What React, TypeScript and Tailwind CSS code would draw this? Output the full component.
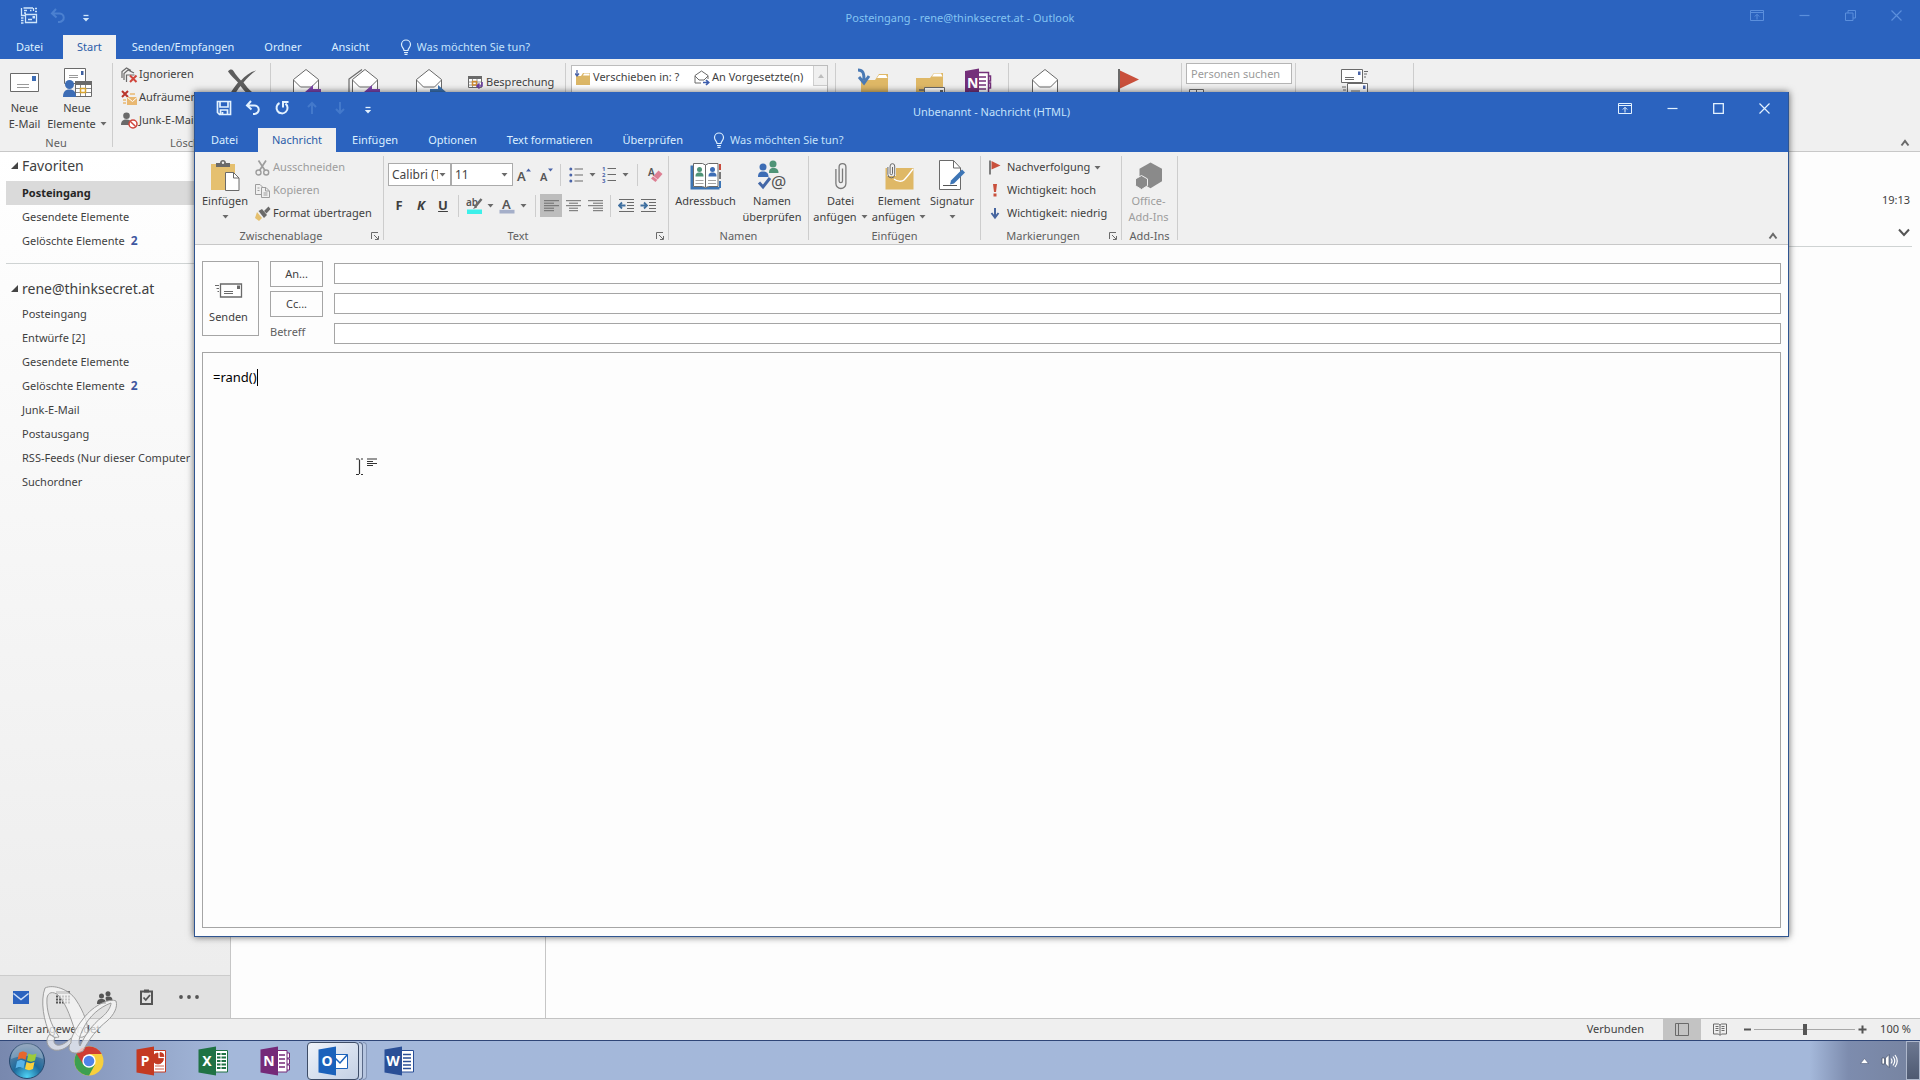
import type { ReactNode } from "react";

const G = "#6a6a6a";

function Svg({ w, h, children }: { w: number; h: number; children: ReactNode }) {
  return (
    <svg width={w} height={h} viewBox={`0 0 ${w} ${h}`} fill="none" aria-hidden="true" className="block shrink-0">
      {children}
    </svg>
  );
}

/* ---------- small glyphs ---------- */

const Caret = () => (
  <Svg w={7} h={4}><path d="M0.5 0h6L3.5 3.6z" fill={G} /></Svg>
);
const ChevronUp = () => (
  <Svg w={10} h={8}><path d="M1.5 6.5L5 2l3.500 4.500" stroke={G} strokeWidth="2" /></Svg>
);
const Launcher = () => (
  <Svg w={8} h={8}><path d="M0.5 7V0.5H7M3 3l4 4M7.500 4v3.500H4" stroke={G} /></Svg>
);
const Bulb = () => (
  <Svg w={12} h={16}>
    <path d="M4 11.500C4 9 1.500 8.500 1.500 5.500a4.500 4.500 0 0 1 9 0C10.500 8.500 8 9 8 11.500zM4 13.500h4M4.500 15.300h3" stroke="currentColor" strokeWidth="1.200" />
  </Svg>
);
const Customize = () => (
  <Svg w={8} h={8}><path d="M1.500 1.500h5" stroke="currentColor" strokeWidth="1.300" /><path d="M0.800 4h6.400L4 7.500z" fill="currentColor" /></Svg>
);
const Undo = () => (
  <Svg w={16} h={16}><path d="M6 1L2 5.500 6.500 9.500M2.500 5.500H9a4.500 4.200 0 0 1 0.500 8.400H8" stroke="currentColor" strokeWidth="2" /></Svg>
);
const Redo = () => (
  <Svg w={16} h={16}><path d="M5.500 3A5.500 5.500 0 1 0 11.500 3.600M9 7.500V2h5.500" stroke="currentColor" strokeWidth="2" /></Svg>
);
const Save = () => (
  <Svg w={16} h={16}><path d="M1.500 1.500h13v13H3.500L1.500 12.500zM4 1.500V7h8V1.500M4.500 14.500V10h7v4.500M6.500 12v2.500" stroke="currentColor" strokeWidth="1.700" /></Svg>
);
const ArrowUp = () => (
  <Svg w={12} h={14}><path d="M6 13V2M2 6l4-4 4 4" stroke="currentColor" strokeWidth="2" /></Svg>
);
const ArrowDown = () => (
  <Svg w={12} h={14}><path d="M6 1v11M2 8l4 4 4-4" stroke="currentColor" strokeWidth="2" /></Svg>
);
const MailSync = () => (
  <Svg w={18} h={18}>
    <path d="M3.500 1H13M1.500 1v7.500H5M13.500 1v3M4 3.500h3M4 6h2M15 1.500h2M15 4.500h2M5.500 7.500h11v8h-11zM8 12.500h4M1 11h2.500M1 13.500h2.500M1 16h2.500M10 3.500h1.500" stroke="currentColor" strokeWidth="1.300" />
    <path d="M12.500 9h2.500v2.500h-2.500z" fill="currentColor" />
  </Svg>
);
const RibbonOptions = () => (
  <Svg w={14} h={11}><path d="M0.500 0.500h13v10H0.500zM0.500 2.500h13M7 9.500V4.500M4.800 6.500L7 4.300l2.200 2.200" stroke="currentColor" /></Svg>
);
const Minimize = () => (
  <Svg w={11} h={11}><path d="M0.500 5.500h10" stroke="currentColor" strokeWidth="1.200" /></Svg>
);
const Maximize = () => (
  <Svg w={11} h={11}><path d="M0.700 0.700h9.600v9.600H0.700z" stroke="currentColor" strokeWidth="1.300" /></Svg>
);
const Restore = () => (
  <Svg w={11} h={11}><path d="M0.500 3h7.500v7.500H0.500zM3 3V0.500h7.500V8H8" stroke="currentColor" /></Svg>
);
const Close = () => (
  <Svg w={11} h={11}><path d="M0.500 0.500l10 10M10.500 0.500l-10 10" stroke="currentColor" strokeWidth="1.200" /></Svg>
);

/* ---------- ribbon icons ---------- */

const NewMail = () => (
  <Svg w={29} h={19}><path d="M0.500 0.500h28v18H0.500z" fill="#fff" stroke={G} /><path d="M22 3h4v5h-4z" fill="#3d6db5" /><path d="M7 11.500h12M7 14.500h12" stroke="#9a9a9a" /></Svg>
);
const NewItems = () => (
  <Svg w={29} h={30}>
    <path d="M1.500 0.500h21v15h-21z" fill="#fff" stroke={G} /><path d="M18 3h2.500v4H18z" fill="#3d5f9f" /><path d="M6 7.500h9M6 9.500h9" stroke="#9a9a9a" />
    <path d="M12.500 13.500h16v15h-16z" fill="#fff" stroke={G} /><path d="M12 13h17v4H12z" fill={G} /><path d="M13 20.500h15M13 24.500h15M17.500 17v11M22.500 17v11" stroke="#8a8a8a" /><path d="M17.500 20.500h5v4h-5z" stroke="#d9a52f" strokeWidth="1.500" />
    <circle cx="6.500" cy="16.500" r="4.500" fill="#3d6db5" /><path d="M0 29c0-5 2-7.500 6.500-7.500S13 24 13 29z" fill="#3d6db5" />
  </Svg>
);
const Ignore = () => (
  <Svg w={17} h={16}><path d="M1 11V4.500L5.500 1 10 3.500M3 13V6.500L7 3l6 3M5.500 15V8h8" stroke={G} strokeWidth="1.200" /><path d="M9 8.500l6.500 6.500M15.500 8.500L9 15" stroke="#d0453b" strokeWidth="2" /></Svg>
);
const CleanUp = () => (
  <Svg w={17} h={16}><path d="M1 1l6 6M7 1L1 7" stroke="#b9352c" strokeWidth="2" /><path d="M6 7h10v8H6z" fill="#e9b872" /><path d="M6.500 7.500l5 4 4.500-4" stroke="#fff" /><path d="M9 4h5M2 10h3M2 13h3" stroke="#e9b872" strokeWidth="1.500" /></Svg>
);
const Junk = () => (
  <Svg w={17} h={17}><circle cx="5.500" cy="3.800" r="3.300" fill={G} /><path d="M0 13c0-4 2-5.500 5.500-5.500 3 0 4 1 4.500 2L8 13z" fill={G} /><circle cx="12" cy="12" r="4" fill="#fff" stroke="#d0453b" strokeWidth="1.500" /><path d="M9.200 9.200l5.600 5.600" stroke="#d0453b" strokeWidth="1.500" /></Svg>
);
const DeleteX = () => (
  <Svg w={30} h={28}><path d="M1 2.500C3 0 5 0 6.500 2 9 6 12 9.500 14 11.500 18 7 23 3 29 1.500 24 5 20 9 16.500 13.500 19 17 22 20.500 25 23l-3 3c-3-2-6-5.500-8.500-9C11 20 9 23 7 27L3 25c2.500-4.500 5-8 8-11.500C7.500 10 4 6.500 1 2.500z" fill="#5d5d5d" /></Svg>
);
function OpenMail({ arrow, double, flip }: { arrow?: string; double?: boolean; flip?: boolean }) {
  return (
    <Svg w={34} h={30}>
      {double && <path d="M1 26V11L14 1.500" stroke={G} strokeWidth="1.200" />}
      <path d="M4.500 29V11.500L17 1.500l12.500 10V29z" fill="#fff" stroke={G} />
      <path d="M4.500 12l7 7h11l7-7" stroke={G} />
      {arrow && !flip && <path d="M32 21h-8v-4l-8 7 8 7v-4h8z" fill={arrow} />}
      {arrow && flip && <path d="M18 21h8v-4l8 7-8 7v-4h-8z" fill={arrow} />}
    </Svg>
  );
}
const Meeting = () => (
  <Svg w={16} h={15}><path d="M0.500 1.500h13v11H0.500z" fill="#fff" stroke={G} /><path d="M0 1h14v3H0z" fill={G} /><path d="M1 7h12M1 10h12M4.500 4v8M9 4v8" stroke="#999" /><path d="M4.500 6.500h4v3.500h-4z" stroke="#d08a2f" strokeWidth="1.500" /><path d="M14 7v4H9.500M11.500 8.500L9 11l2.500 2.500" stroke="#6d3fa0" strokeWidth="1.600" /></Svg>
);
const Folder = () => (
  <Svg w={16} h={16}><path d="M1 6h5l2-3h7v12H1z" fill="#dcb767" /><path d="M9 3.500h5.500v2H8z" fill="#fff" /><path d="M2 0v5M0 3.500L2 6l2-2.500" stroke="#4a64a8" strokeWidth="1.300" /></Svg>
);
const MailForward = () => (
  <Svg w={16} h={16}><path d="M1 13V5.500L7.500 1 14 5.500V9M1 13h6M1 6l4 4h5l4-4" stroke={G} /><path d="M9 12.500h5.500M12 10l2.700 2.500L12 15" stroke="#3f5fae" strokeWidth="1.700" /></Svg>
);
const MoveFolder = () => (
  <Svg w={32} h={30}><path d="M4 12h14l4-6h9v24H4z" fill="#dfb866" /><path d="M22 7h7l1.500 3H20z" fill="#fff" /><path d="M1 2c5 0 6 3 6 10M2 9l5 6 5-7" stroke="#4a7ab5" strokeWidth="3" /></Svg>
);
const RulesFolder = () => (
  <Svg w={32} h={30}><path d="M1 10h14l4-5h9v25H1z" fill="#dfb866" /><path d="M19 5.500h7l1.500 3H17z" fill="#fff" /><path d="M9.500 19.500h20v10h-20z" fill="#fff" stroke={G} /><path d="M25 22h3v4h-3z" fill={G} /><path d="M4 22h5M4 25h5M5 28h4M12 26h8" stroke={G} strokeWidth="1.500" /></Svg>
);
const OneNoteRibbon = () => (
  <Svg w={30} h={30}>
    <path d="M14 4.500h12.500v23H14z" fill="#fff" stroke="#74307a" strokeWidth="1.500" /><path d="M26.500 8h2v5h-2M26.500 15h2v5h-2M17 9h7M17 13h7M17 17h7M17 21h7" stroke="#74307a" strokeWidth="1.500" />
    <path d="M3 3l14-2.500v29L3 27z" fill="#74307a" />
    <text x="5" y="20" fontSize="14" fontWeight="700" fill="#fff" fontFamily="Noto Sans, sans-serif">N</text>
    <path d="M0 27h7v-4l7 5-7 5z" fill="#4a64a8" />
  </Svg>
);
const BigFlag = () => (
  <Svg w={24} h={30}><path d="M3 2.500l19 9-19 9z" fill="#c9503c" /><path d="M2 1v29" stroke={G} strokeWidth="2" /></Svg>
);
const SendReceive = () => (
  <Svg w={30} h={30}><path d="M1.500 1.500h21v13h-21zM7.500 15.500h20v13h-20z" fill="#fff" stroke={G} /><path d="M18 3.500h2.500V7H18zM23 17.500h2.500V21H23z" fill="#4a64a8" /><path d="M5 9.500h9M5 11.500h9M11 23h9M11 25h9M24 3.500h4M24 6h3M24 9h2M2 19h4M3 22h3M4 25h2" stroke={G} /></Svg>
);
const Contacts = () => (
  <Svg w={16} h={14}><path d="M0.500 0.500h14v12h-14zM7.500 0v12" fill="#fff" stroke={G} /><circle cx="4" cy="4.500" r="1.500" fill="#4b8a6a" /><circle cx="11" cy="4.500" r="1.500" fill="#3d6db5" /></Svg>
);

const Paste = () => (
  <Svg w={30} h={31}><path d="M1 4h24v26H1z" fill="#e5c06f" /><path d="M6 7V3h4c0-4 6-4 6 0h4v4z" fill={G} /><circle cx="13" cy="2.800" r="1.200" fill="#f0f0f0" /><path d="M15.500 12.500h8l5.500 5.500v12.500H15.500z" fill="#fff" stroke={G} /><path d="M23.500 12.500V18H29" stroke={G} /></Svg>
);
const Cut = () => (
  <Svg w={15} h={16}><path d="M3.500 0.500l6.500 10M11 0.500L4.500 10.500" stroke="#9d9d9d" strokeWidth="1.700" /><circle cx="3.500" cy="12.500" r="2.500" stroke="#9d9d9d" strokeWidth="1.400" /><circle cx="11.200" cy="12.500" r="2.500" stroke="#9d9d9d" strokeWidth="1.400" /></Svg>
);
const Copy = () => (
  <Svg w={15} h={14}><path d="M6 10.500H0.500v-10H5l2.500 2.500M6.500 3.500H11l3.500 3.500v6.500h-8zM10.500 3.500V7H14M2.500 4h2M2.500 6.500h2M8.500 9h4M8.500 11h4" stroke="#9d9d9d" /></Svg>
);
const Brush = () => (
  <Svg w={16} h={15}><path d="M2 6l5 6-3 3-4-3z" fill="#e5c06f" /><path d="M3.500 5L7 3l5 6-3 3z" fill={G} /><path d="M9 5l4.500-4.500L15.500 3l-4 4.500z" fill={G} /></Svg>
);
const GrowFont = () => (
  <Svg w={16} h={16}><text x="1" y="14" fontSize="13" fontWeight="600" fill="#555" fontFamily="Noto Sans, sans-serif">A</text><path d="M10 4.500L12.500 1.500 15 4.500z" fill="#4a64a8" /></Svg>
);
const ShrinkFont = () => (
  <Svg w={16} h={16}><text x="2" y="14" fontSize="11" fontWeight="600" fill="#555" fontFamily="Noto Sans, sans-serif">A</text><path d="M10 1.500h5L12.500 4.500z" fill="#4a64a8" /></Svg>
);
const Bullets = () => (
  <Svg w={15} h={16}><circle cx="1.800" cy="2" r="1.500" fill="#4a64a8" /><circle cx="1.800" cy="8" r="1.500" fill="#4a64a8" /><circle cx="1.800" cy="14" r="1.500" fill="#4a64a8" /><path d="M5.500 2H14M5.500 8H14M5.500 14H14" stroke={G} strokeWidth="1.200" /></Svg>
);
const Numbering = () => (
  <Svg w={15} h={17}>
    <g fontSize="6" fontWeight="700" fill="#4a64a8" fontFamily="Noto Sans, sans-serif"><text x="0" y="5">1</text><text x="0" y="11">2</text><text x="0" y="17">3</text></g>
    <path d="M5.500 2.500H14M5.500 8.500H14M5.500 14.500H14" stroke={G} strokeWidth="1.200" />
  </Svg>
);
const ClearFormat = () => (
  <Svg w={16} h={16}><text x="1" y="9" fontSize="10" fontWeight="600" fill="#555" fontFamily="Noto Sans, sans-serif">A</text><path d="M11.500 3.500L15.500 7 8.500 15 4 11.500z" fill="#dd7f93" /><path d="M6 9l5 4" stroke="#f5d0d8" /></Svg>
);
const Highlight = () => (
  <Svg w={17} h={17}><text x="0" y="9" fontSize="10" fontWeight="600" fill="#555" fontFamily="Noto Sans, sans-serif">ab</text><path d="M15.500 2L9 10" stroke={G} strokeWidth="2.500" /><path d="M9.500 8.500L7 12l4-1.500z" fill={G} /><path d="M1 12.500h15V17H1z" fill="#3df0ea" /></Svg>
);
const FontColor = () => (
  <Svg w={16} h={17}><text x="3" y="12" fontSize="13" fontWeight="600" fill="#555" fontFamily="Noto Sans, sans-serif">A</text><path d="M0.500 12.800h15V16.500h-15z" fill="#a5afc9" /></Svg>
);
function Lines({ rows }: { rows: [number, number][] }) {
  return (
    <Svg w={15} h={12}>
      {rows.map(([a, b], i) => <path key={i} d={`M${a} ${i * 2.500 + 0.700}H${b}`} stroke={G} />)}
    </Svg>
  );
}
function Indent({ out }: { out?: boolean }) {
  return (
    <Svg w={17} h={13}>
      <path d="M1 0.500h15M9 3.500h7M9 6.500h7M9 9.500h7M1 12.500h15" stroke={G} />
      <path d={out ? "M7.500 6.500H1.500M4 3.500l-3 3 3 3" : "M0.500 6.500h6M4 3.500l3 3-3 3"} stroke="#3f6f9f" strokeWidth="1.800" />
    </Svg>
  );
}
const AddressBook = () => (
  <Svg w={32} h={28}>
    <path d="M0.500 3.500h3V25h26v2.500H0.500z" fill="#3d75b5" /><path d="M29 2h2v6h-2z" fill="#c94a3c" /><path d="M29 10h2v7h-2z" fill="#777" /><path d="M29 19h2v7h-2z" fill="#3d75b5" />
    <path d="M3.500 1.500h9L15.500 3l3-1.500h9.500v23h-9.500l-3 1.200-3-1.200h-9zM15.500 3v22" fill="#fff" stroke={G} />
    <circle cx="9.500" cy="7.500" r="2.500" fill="#4f9477" /><path d="M5.500 14.500c0-3 1-4 4-4s4 1 4 4z" fill="#4f9477" /><circle cx="22.500" cy="7.500" r="2.500" fill="#3d6db5" /><path d="M18.500 14.500c0-3 1-4 4-4s4 1 4 4z" fill="#3d6db5" />
    <path d="M5.500 18.500h8M5.500 21.500h8M18 18.500h8M18 21.500h8" stroke="#a5a5a5" />
  </Svg>
);
const CheckNames = () => (
  <Svg w={31} h={31}>
    <circle cx="16" cy="4" r="3.500" fill="#4f9477" /><path d="M12 13c0-3.500 1-5 4.500-5s5 1.500 5 5z" fill="#4f9477" />
    <circle cx="6" cy="7" r="3.500" fill="#3d6db5" /><path d="M1 17c0-4 1.500-5.500 5-5.500s5.500 1.500 5.500 5.500z" fill="#3d6db5" />
    <path d="M2 22.500l4 4.500 7-9" stroke="#4468a8" strokeWidth="3" />
    <text x="14" y="28" fontSize="17" fill="#555" fontFamily="Noto Sans, sans-serif">@</text>
  </Svg>
);
const Clip = () => (
  <Svg w={12} h={29}><path d="M7.500 7.500V20a1.700 1.700 0 0 1-3.400 0V6a3.400 3.400 0 0 1 6.800 0V22.500a5 5 0 0 1-10 0V8" stroke="#7a7a7a" strokeWidth="1.300" /></Svg>
);
const AttachItem = () => (
  <Svg w={29} h={28}><path d="M0.500 6h28v21.500h-28z" fill="#dfb866" /><path d="M9 17c3 2.500 8 3 10 1 3-3 6-7 9-11" stroke="#fff" strokeWidth="1.300" /><path d="M2 2h9v12H2z" fill="#f0f0f0" /><path d="M7.500 5v6.500a1.200 1.200 0 0 1-2.400 0V4a2.300 2.300 0 0 1 4.600 0v8.500a3.400 3.400 0 0 1-6.800 0V5" stroke={G} /></Svg>
);
const Signature = () => (
  <Svg w={28} h={31}><path d="M1.500 0.500h14l7 7.500v21.500h-21z" fill="#fff" stroke={G} /><path d="M15.500 0.500V8h7" stroke={G} /><path d="M5 25.500h14" stroke="#555" /><path d="M12 24.500l1-4L24 9.500l3 3L16 23.500z" fill="#3d75b5" /></Svg>
);
const Flag = () => (
  <Svg w={12} h={15}><path d="M2.500 1L11.500 5.500 2.500 9.500z" fill="#c9503c" /><path d="M1 0.500v14" stroke={G} strokeWidth="1.700" /></Svg>
);
const High = () => (
  <Svg w={12} h={13}><path d="M4 0h4L7 8H5z" fill="#c9503c" /><path d="M4.500 9.500h3v3h-3z" fill="#c9503c" /></Svg>
);
const Low = () => (
  <Svg w={12} h={13}><path d="M6 1v9M2.500 6L6 10.500 9.500 6" stroke="#46659f" strokeWidth="2" /></Svg>
);
const AddIns = () => (
  <Svg w={28} h={28}><path d="M15.500 0.500l11.500 6.300v12.400l-11.500 7-11-6.200V6.800z" fill="#8a8a8a" /><path d="M6.500 13.500l6 3.400v6.800l-6 3.800-6-3.800v-6.800z" fill="#8a8a8a" stroke="#f0f0f0" /></Svg>
);
const SendIcon = () => (
  <Svg w={28} h={15}><path d="M5.500 1h21v13h-21z" fill="#fff" stroke={G} strokeWidth="1.300" /><path d="M22 2.500h3V6h-3z" fill={G} /><path d="M9 8.500h9M9 10.500h9M0 2.500h4M1.500 5.500H4M2.500 8.500H4" stroke={G} /></Svg>
);

/* ---------- ribbon parts ---------- */

function Sep() {
  return <div className="my-1 w-px shrink-0 bg-[#cdcdcd]" />;
}
function MiniSep({ className }: { className: string }) {
  return <div className={`h-[22px] w-px shrink-0 bg-[#cdcdcd] ${className}`} />;
}
function Group({ name, label, width, launcher, children }: { name?: string; label?: string; width: string; launcher?: boolean; children: ReactNode }) {
  return (
    <>
      <section aria-label={name ?? label} className={`flex shrink-0 flex-col pt-1 ${width}`}>
        <div className="flex flex-1">{children}</div>
        <div className={`relative h-4 text-center leading-4 text-[#5f5f5f] ${launcher ? "pr-4" : ""}`}>
          {label}
          {launcher && (
            <button type="button" aria-label={`${label}: weitere Optionen`} className="absolute right-1 top-1"><Launcher /></button>
          )}
        </div>
      </section>
      <Sep />
    </>
  );
}
function Big({ icon, name, l1, l2, caret, width, muted }: { icon: ReactNode; name?: string; l1?: string; l2?: string; caret?: boolean; width: string; muted?: boolean }) {
  return (
    <button type="button" aria-label={name} className={`flex shrink-0 flex-col items-center pt-0.5 ${width} ${muted ? "text-[#9d9d9d]" : ""}`}>
      <span className="flex h-[35px] items-center">{icon}</span>
      <span className="h-4 whitespace-nowrap leading-4">{l1}</span>
      <span className="flex h-4 items-center gap-1 whitespace-nowrap leading-4">{l2}{caret && <Caret />}</span>
    </button>
  );
}
function Small({ icon, name, text, caret, muted }: { icon: ReactNode; name?: string; text?: string; caret?: boolean; muted?: boolean }) {
  return (
    <button type="button" aria-label={name} className={`flex h-[23px] items-center whitespace-nowrap ${muted ? "text-[#9d9d9d]" : ""}`}>
      <span className="flex w-[18px] shrink-0 items-center">{icon}</span>
      {text}
      {caret && <span className="ml-1"><Caret /></span>}
    </button>
  );
}
function Tool({ label, children, width = "w-[22px]", active }: { label: string; children: ReactNode; width?: string; active?: boolean }) {
  return (
    <button type="button" aria-label={label} className={`flex h-[23px] shrink-0 items-center justify-center ${width} ${active ? "bg-[#bdbdbd]" : ""}`}>
      {children}
    </button>
  );
}
function Combo({ label, value, width }: { label: string; value: string; width: string }) {
  return (
    <div className={`relative h-[23px] shrink-0 border border-[#ababab] bg-white ${width}`}>
      <select aria-label={label} className="h-full w-full appearance-none bg-transparent pl-[3px] pr-3 text-[12px] text-[#444] outline-none">
        <option>{value}</option>
      </select>
      <span className="pointer-events-none absolute right-1 top-[9px]"><Caret /></span>
    </div>
  );
}
function Tabs({ active, items }: { active: string; items: string[] }) {
  return (
    <nav className="flex h-6 gap-0.5 text-[#dcefff]">
      <button type="button" className="w-[61px] pr-0.5 pt-px">Datei</button>
      {items.map((t) => (
        <button key={t} type="button" className={`whitespace-nowrap px-[14px] ${t === active ? "bg-[#f0f0f0] text-[#2b5da8]" : ""}`}>{t}</button>
      ))}
      <label className="ml-[14px] flex items-center gap-[5px]">
        <Bulb />
        <input aria-label="Was möchten Sie tun?" placeholder="Was möchten Sie tun?" className="w-[140px] bg-transparent outline-none placeholder:text-[#c4e2fb]" />
      </label>
    </nav>
  );
}

/* ---------- main window ---------- */

type FolderItem = { name: string; count?: number; selected?: boolean };

function Folders({ items }: { items: FolderItem[] }) {
  return (
    <ul>
      {items.map(({ name, count, selected }) => (
        <li key={name}>
          <a href="#" className={`ml-1.5 flex h-6 items-center whitespace-nowrap pl-4 ${selected ? "bg-[#dadada] font-bold text-[#262626]" : ""}`}>
            {name}
            {count && <span className="ml-1.5 text-[12px] font-bold text-[#3f57a0]">{count}</span>}
          </a>
        </li>
      ))}
    </ul>
  );
}
const FolderHead = ({ text }: { text: string }) => (
  <h2 className="flex h-[26px] items-center gap-1 pl-[11px] text-[14px]">
    <Svg w={7} h={7}><path d="M7 0v7H0z" fill="#444" /></Svg>{text}
  </h2>
);

function Sidebar() {
  return (
    <aside className="flex w-[231px] shrink-0 flex-col border-r border-[#c6c6c6] bg-linear-to-b from-white to-[#ececec]">
      <div className="flex-1 overflow-hidden">
        <div className="h-[29px]"><FolderHead text="Favoriten" /></div>
        <Folders items={[{ name: "Posteingang", selected: true }, { name: "Gesendete Elemente" }, { name: "Gelöschte Elemente", count: 2 }]} />
        <div className="ml-1.5 mt-[10px] border-t border-[#cfd3d3]" />
        <div className="pb-px pt-[11px]"><FolderHead text="rene@thinksecret.at" /></div>
        <Folders
          items={[
            { name: "Posteingang" }, { name: "Entwürfe [2]" }, { name: "Gesendete Elemente" }, { name: "Gelöschte Elemente", count: 2 },
            { name: "Junk-E-Mail" }, { name: "Postausgang" }, { name: "RSS-Feeds (Nur dieser Computer" }, { name: "Suchordner" },
          ]}
        />
      </div>
      <nav className="relative flex h-[43px] items-center border-t border-[#cccccc] bg-[#e1e1e1] pl-[13px]">
        <button type="button" aria-label="E-Mail" className="w-[43px]"><Svg w={16} h={13}><path d="M0 0h16v13H0z" fill="#2b63bf" /><path d="M0.500 2.500L8 8.500l7.500-6" stroke="#cfe0f8" strokeWidth="1.500" /></Svg></button>
        <button type="button" aria-label="Kalender" className="w-[41px]"><Svg w={14} h={13}><path d="M0 0h14v3H0z" fill="#777" /><path d="M0 5.500h14M0 8.500h14M0 11.500h14" stroke="#555" strokeWidth="2" strokeDasharray="2 1" /></Svg></button>
        <button type="button" aria-label="Personen" className="w-[43px]"><Svg w={16} h={13}><circle cx="11" cy="2.700" r="2.500" fill="#555" /><circle cx="4.500" cy="5" r="2.500" fill="#555" /><path d="M0 13c0-4 1.500-5 4.500-5s4.500 1 4.500 5zM9 9c-1-3 0-3.500 2-3.500 3.500 0 4.500 1 4.500 4.500H9.500z" fill="#555" /></Svg></button>
        <button type="button" aria-label="Aufgaben" className="w-[39px]"><Svg w={13} h={16}><path d="M1 2.500h11v12.500H1z" stroke="#555" strokeWidth="2" /><path d="M4 0.500h5v3H4z" fill="#555" /><path d="M3.500 8.500l2.300 2.500L10 6" stroke="#555" strokeWidth="1.800" /></Svg></button>
        <button type="button" aria-label="Mehr"><Svg w={20} h={4}><circle cx="2" cy="2" r="1.900" fill="#555" /><circle cx="10" cy="2" r="1.900" fill="#555" /><circle cx="18" cy="2" r="1.900" fill="#555" /></Svg></button>
      </nav>
    </aside>
  );
}

function MainWindow() {
  return (
    <div className="flex min-h-0 flex-1 flex-col">
      <header className="flex h-[59px] flex-col justify-between bg-[#2b63bf]">
        <div className="relative flex h-[35px] items-center">
          <div className="flex items-center pb-1 text-[#cfe6fb]">
            <button type="button" aria-label="Senden/Empfangen" className="ml-5"><MailSync /></button>
            <button type="button" aria-label="Rückgängig" className="ml-3 text-[#4b80d0]"><Undo /></button>
            <button type="button" aria-label="Symbolleiste anpassen" className="ml-4 pt-1"><Customize /></button>
          </div>
          <h1 className="absolute inset-x-0 top-2.5 text-center leading-4 text-[#84c3f2]">Posteingang - rene@thinksecret.at - Outlook</h1>
          <div className="ml-auto flex items-center gap-[35px] pb-1 pr-[18px] text-[#5b8fdc]">
            <button type="button" aria-label="Menüband"><RibbonOptions /></button>
            <button type="button" aria-label="Minimieren"><Minimize /></button>
            <button type="button" aria-label="Wiederherstellen"><Restore /></button>
            <button type="button" aria-label="Schließen"><Close /></button>
          </div>
        </div>
        <Tabs active="Start" items={["Start", "Senden/Empfangen", "Ordner", "Ansicht"]} />
      </header>

      <div className="flex h-[93px] shrink-0 border-b border-[#c8c8c8] bg-[#f0f0f0]">
        <Group label="Neu" width="w-[112px]">
          <Big width="w-[49px]" icon={<NewMail />} l1="Neue" l2="E-Mail" />
          <Big width="w-[56px]" icon={<NewItems />} l1="Neue" l2="Elemente" caret />
        </Group>
        <Group label="Löschen" width="w-[157px]">
          <div className="w-[107px] pl-2">
            <Small icon={<Ignore />} text="Ignorieren" />
            <Small icon={<CleanUp />} text="Aufräumen" />
            <Small icon={<Junk />} text="Junk-E-Mail" />
          </div>
          <Big width="w-[44px]" icon={<DeleteX />} name="Löschen" />
        </Group>
        <Group name="Antworten" width="w-[294px]">
          <Big width="w-[69px]" icon={<OpenMail arrow="#7e45ae" />} name="Antworten" />
          <Big width="w-[49px]" icon={<OpenMail arrow="#7e45ae" double />} name="Allen antworten" />
          <Big width="w-[79px]" icon={<OpenMail arrow="#3d75b5" flip />} name="Weiterleiten" />
          <div className="pt-2"><Small icon={<Meeting />} text="Besprechung" /></div>
        </Group>
        <Group name="QuickSteps" width="w-[269px]">
          <div className="ml-[5px] mt-0.5 flex h-[60px] w-[257px] border border-[#bdbdbd] bg-white">
            <div className="w-[122px] pl-[3px]"><Small icon={<Folder />} text="Verschieben in: ?" /><Small icon={<Contacts />} name="Team-E-Mail" /></div>
            <div className="flex-1"><Small icon={<MailForward />} text="An Vorgesetzte(n)" /><Small icon={<MailForward />} name="Erledigt" /></div>
            <div className="flex h-5 w-[14px] items-center justify-center border-b border-l border-[#cfcfcf] bg-[#f0f0f0]"><Svg w={6} h={4}><path d="M0 4h6L3 0z" fill="#bdbdbd" /></Svg></div>
          </div>
        </Group>
        <Group name="Verschieben" width="w-[172px]">
          <Big width="w-[74px]" icon={<MoveFolder />} name="Verschieben" />
          <Big width="w-[42px]" icon={<RulesFolder />} name="Regeln" />
          <Big width="w-[50px]" icon={<OneNoteRibbon />} name="OneNote" />
        </Group>
        <Group name="Kategorien" width="w-[172px]">
          <Big width="w-[72px]" icon={<OpenMail />} name="Gelesen" />
          <Big width="w-[96px]" icon={<BigFlag />} name="Nachverfolgung" />
        </Group>
        <Group name="Suchen" width="w-[113px]">
          <div className="w-full">
            <input aria-label="Personen suchen" placeholder="Personen suchen" className="ml-1 block h-[21px] w-[106px] border border-[#b5b5b5] bg-white px-1 outline-none placeholder:text-[#9a9a9a]" />
            <div className="pl-[7px]"><Small icon={<Contacts />} name="Adressbuch" /></div>
          </div>
        </Group>
        <Group name="Senden/Empfangen" width="w-[117px]">
          <Big width="w-full" icon={<SendReceive />} name="Alle Ordner senden/empfangen" />
        </Group>
        <button type="button" aria-label="Menüband reduzieren" className="ml-auto mr-[10px] self-end pb-1"><ChevronUp /></button>
      </div>

      <div className="flex min-h-0 flex-1 bg-[#fdfdfd]">
        <Sidebar />
        <div className="w-[315px] shrink-0 border-r border-[#c6c6c6]" />
        <main className="min-w-0 flex-1 px-2">
          <div className="flex h-[95px] flex-col items-end border-b border-[#cfd3d3] pr-0.5 pt-10">
            <time className="leading-4">19:13</time>
            <button type="button" aria-label="Details" className="mt-5"><Svg w={12} h={9}><path d="M1 1.500l5 5.500 5-5.500" stroke="#555" strokeWidth="2" /></Svg></button>
          </div>
        </main>
      </div>

      <footer className="flex h-[22px] shrink-0 items-center border-t border-[#c3c3c3] bg-[#efefef]">
        <span className="pl-[7px]">Filter angewendet</span>
        <span className="ml-auto mr-[19px]">Verbunden</span>
        <button type="button" aria-label="Normal" className="flex h-full w-[38px] items-center justify-center bg-[#c3c3c3]"><Svg w={14} h={13}><path d="M0.500 0.500h13v12H0.500zM3.500 0.500v12" stroke={G} /></Svg></button>
        <button type="button" aria-label="Lesen" className="ml-3"><Svg w={14} h={13}><path d="M0.500 1h5l1.500 1 1.500-1h5v10h-5L7 12.500 5.500 11h-5zM7 2v10M2.500 3.500h3M2.500 5.500h3M2.500 7.500h3M8.500 3.500h3M8.500 5.500h3M8.500 7.500h3" stroke={G} /></Svg></button>
        <button type="button" aria-label="Verkleinern" className="ml-[17px]"><Svg w={7} h={7}><path d="M0 3.500h7" stroke="#555" strokeWidth="2" /></Svg></button>
        <input type="range" aria-label="Zoom" defaultValue={50} className="mx-[3px] h-3 w-[101px] appearance-none bg-transparent [&::-webkit-slider-runnable-track]:h-px [&::-webkit-slider-runnable-track]:bg-[#a8a8a8] [&::-webkit-slider-thumb]:-mt-[5px] [&::-webkit-slider-thumb]:h-[11px] [&::-webkit-slider-thumb]:w-1 [&::-webkit-slider-thumb]:appearance-none [&::-webkit-slider-thumb]:bg-[#555]" />
        <button type="button" aria-label="Vergrößern"><Svg w={9} h={9}><path d="M0.500 4.500h8M4.500 0.500v8" stroke="#555" strokeWidth="2" /></Svg></button>
        <span className="w-[53px] pr-[9px] text-right">100 %</span>
      </footer>
    </div>
  );
}

/* ---------- message window ---------- */

function Compose() {
  return (
    <div role="dialog" aria-label="Unbenannt - Nachricht (HTML)" className="absolute bottom-[143px] left-[194px] right-[131px] top-[92px] flex flex-col border border-t-0 border-[#2f5591] bg-[#fdfdfd] shadow-[0_0_7px_rgba(0,0,0,0.6)]">
      <header className="flex h-[60px] shrink-0 flex-col justify-between bg-[#2b63bf]">
        <div className="relative flex h-8 items-center text-[#e3f2ff]">
          <div className="flex items-center">
            <button type="button" aria-label="Speichern" className="ml-[21px]"><Save /></button>
            <button type="button" aria-label="Rückgängig" className="ml-[13px]"><Undo /></button>
            <button type="button" aria-label="Wiederholen" className="ml-[13px]"><Redo /></button>
            <button type="button" aria-label="Vorheriges" className="ml-4 text-[#4379cb]"><ArrowUp /></button>
            <button type="button" aria-label="Nächstes" className="ml-4 text-[#4379cb]"><ArrowDown /></button>
            <button type="button" aria-label="Symbolleiste anpassen" className="ml-[18px] pt-1"><Customize /></button>
          </div>
          <h2 className="absolute inset-x-0 top-3 text-center leading-4 text-[#c4e2fb]">Unbenannt - Nachricht (HTML)</h2>
          <div className="ml-auto flex items-center gap-[35px] pr-[18px]">
            <button type="button" aria-label="Menüband"><RibbonOptions /></button>
            <button type="button" aria-label="Minimieren"><Minimize /></button>
            <button type="button" aria-label="Maximieren"><Maximize /></button>
            <button type="button" aria-label="Schließen"><Close /></button>
          </div>
        </div>
        <Tabs active="Nachricht" items={["Nachricht", "Einfügen", "Optionen", "Text formatieren", "Überprüfen"]} />
      </header>

      <div className="flex h-[93px] shrink-0 border-b border-[#c8c8c8] bg-[#f0f0f0]">
        <Group label="Zwischenablage" width="w-[188px]" launcher>
          <Big width="w-[60px]" icon={<Paste />} l1="Einfügen" caret />
          <div>
            <Small icon={<Cut />} text="Ausschneiden" muted />
            <Small icon={<Copy />} text="Kopieren" muted />
            <Small icon={<Brush />} text="Format übertragen" />
          </div>
        </Group>
        <Group label="Text" width="w-[284px]" launcher>
          <div className="pl-1 pt-[3px]">
            <div className="flex h-[31px] items-center">
              <Combo label="Schriftart" value="Calibri (T" width="w-[63px]" />
              <Combo label="Schriftgrad" value="11" width="w-[62px]" />
              <Tool label="Schrift vergrößern"><GrowFont /></Tool>
              <Tool label="Schrift verkleinern"><ShrinkFont /></Tool>
              <MiniSep className="ml-[3px] mr-1" />
              <Tool label="Aufzählung"><Bullets /></Tool>
              <Tool label="Aufzählungsoptionen" width="w-[11px]"><Caret /></Tool>
              <Tool label="Nummerierung"><Numbering /></Tool>
              <Tool label="Nummerierungsoptionen" width="w-[11px]"><Caret /></Tool>
              <MiniSep className="mx-1.5" />
              <Tool label="Formatierung löschen"><ClearFormat /></Tool>
            </div>
            <div className="flex h-[31px] items-center">
              <Tool label="Fett"><span className="text-[13px] font-bold">F</span></Tool>
              <Tool label="Kursiv"><span className="text-[13px] font-bold italic">K</span></Tool>
              <Tool label="Unterstrichen"><span className="text-[13px] font-bold underline">U</span></Tool>
              <MiniSep className="mx-1" />
              <Tool label="Hervorheben"><Highlight /></Tool>
              <Tool label="Hervorhebungsfarben" width="w-[11px]"><Caret /></Tool>
              <Tool label="Schriftfarbe"><FontColor /></Tool>
              <Tool label="Schriftfarben" width="w-[11px]"><Caret /></Tool>
              <MiniSep className="ml-1.5 mr-1" />
              <Tool label="Linksbündig" active><Lines rows={[[0, 15], [0, 10], [0, 15], [0, 10], [0, 10]]} /></Tool>
              <Tool label="Zentriert"><Lines rows={[[0, 15], [3, 12], [0, 15], [3, 12], [3, 12]]} /></Tool>
              <Tool label="Rechtsbündig"><Lines rows={[[0, 15], [5, 15], [0, 15], [5, 15], [5, 15]]} /></Tool>
              <MiniSep className="mx-1" />
              <Tool label="Einzug verkleinern"><Indent out /></Tool>
              <Tool label="Einzug vergrößern"><Indent /></Tool>
            </div>
          </div>
        </Group>
        <Group label="Namen" width="w-[139px]">
          <Big width="w-[73px]" icon={<AddressBook />} l1="Adressbuch" />
          <Big width="w-[60px]" icon={<CheckNames />} l1="Namen" l2="überprüfen" />
        </Group>
        <Group label="Einfügen" width="w-[171px]">
          <Big width="w-[63px]" icon={<Clip />} l1="Datei" l2="anfügen" caret />
          <Big width="w-[54px]" icon={<AttachItem />} l1="Element" l2="anfügen" caret />
          <Big width="w-[52px]" icon={<Signature />} l1="Signatur" caret />
        </Group>
        <Group label="Markierungen" width="w-[140px]" launcher>
          <div className="pl-2">
            <Small icon={<Flag />} text="Nachverfolgung" caret />
            <Small icon={<High />} text="Wichtigkeit: hoch" />
            <Small icon={<Low />} text="Wichtigkeit: niedrig" />
          </div>
        </Group>
        <Group label="Add-Ins" width="w-[55px]">
          <Big width="w-[53px]" icon={<AddIns />} l1="Office-" l2="Add-Ins" muted />
        </Group>
        <button type="button" aria-label="Menüband reduzieren" className="ml-auto mr-[10px] self-end pb-1"><ChevronUp /></button>
      </div>

      <form className="flex flex-1 flex-col px-[7px] pb-2 pt-4">
        <div className="flex h-[91px] items-start">
          <button type="button" className="flex h-[75px] w-[57px] flex-col items-center justify-center gap-[11px] border border-[#a5a5a5] pr-1 pt-2.5">
            <SendIcon />
            <span className="leading-4">Senden</span>
          </button>
          <div className="ml-[11px] flex flex-1 flex-col gap-1">
            {["An...", "Cc..."].map((t) => (
              <div key={t} className="flex h-[26px] items-start gap-[11px]">
                <button type="button" className="h-[26px] w-[53px] border border-[#a5a5a5]">{t}</button>
                <input aria-label={t} className="mt-0.5 h-[21px] flex-1 border border-[#a5a5a5] bg-white px-1 outline-none" />
              </div>
            ))}
            <div className="flex h-[26px] items-start gap-[11px]">
              <label htmlFor="subject" className="w-[53px] pt-[3px] leading-4 text-[#5f5f5f]">Betreff</label>
              <input id="subject" className="mt-0.5 h-[21px] flex-1 border border-[#a5a5a5] bg-white px-1 outline-none" />
            </div>
          </div>
        </div>
        <div className="relative flex flex-1 border border-[#a5a5a5]">
          <textarea aria-label="Nachrichtentext" defaultValue="=rand()" className="flex-1 resize-none bg-transparent px-[10px] py-[15px] text-[13px] leading-[18px] text-black outline-none" />
          <span className="absolute left-[54px] top-4 h-[17px] w-px bg-black" />
          <span className="absolute left-[152px] top-[105px]">
            <Svg w={24} h={18}><path d="M1 1h3M6 1h2M1 16.500h3M6 16.500h2M4.500 1.500V16" stroke="#333" strokeWidth="1.200" /><path d="M12 1h10M12 3.500h6M12 5.500h10M12 7.500h6" stroke="#333" strokeWidth="1.200" /></Svg>
          </span>
        </div>
      </form>
    </div>
  );
}

/* ---------- taskbar ---------- */

function AppIcon({ letter, color, children }: { letter: string; color: string; children: ReactNode }) {
  return (
    <Svg w={31} h={30}>
      {children}
      <path d="M0.500 3.500L18 0.500v29L0.500 26.500z" fill={color} />
      <text x="9" y="20" textAnchor="middle" fontSize="14" fontWeight="700" fill="#fff" fontFamily="Noto Sans, sans-serif">{letter}</text>
    </Svg>
  );
}

function Taskbar() {
  return (
    <nav className="flex h-10 shrink-0 items-center border-t border-[#2f4677] bg-linear-to-r from-[#7888ae] via-[#a4b8da] via-12% to-[#a4b8da]">
      <button type="button" aria-label="Start" className="ml-2">
        <svg width="38" height="38" viewBox="0 0 38 38" aria-hidden="true">
          <defs>
            <radialGradient id="orb" cx="0.500" cy="0.950" r="0.900"><stop offset="0" stopColor="#4fd3f5" /><stop offset="0.450" stopColor="#1d6a9c" /><stop offset="1" stopColor="#6d88a8" /></radialGradient>
          </defs>
          <circle cx="19" cy="19" r="17.500" fill="url(#orb)" stroke="#27496f" />
          <path d="M3 17a16 16 0 0 1 32 0c-8-4-24-4-32 0z" fill="#fff" opacity="0.250" />
          <path d="M11 11c3-2 5-2 8 0l-1.500 7c-3-2-5-2-8 0z" fill="#e8672c" /><path d="M20.500 11.500c3 1.500 5 1.500 8 0L27 18.500c-3 1.500-5 1.500-8 0z" fill="#9ccb3b" />
          <path d="M9 19.500c3-2 5-2 8 0l-1.500 7c-3-2-5-2-8 0z" fill="#58b3e8" /><path d="M18.500 20c3 1.500 5 1.500 8 0L25 27c-3 1.500-5 1.500-8 0z" fill="#fbd03b" />
        </svg>
      </button>
      <button type="button" aria-label="Chrome" className="ml-7">
        <Svg w={30} h={30}>
          <circle cx="15" cy="15" r="14.500" fill="#f7cf3d" />
          <path d="M15 15L2.400 7.800A14.500 14.500 0 0 0 15 29.500l6-11z" fill="#3c9f50" />
          <path d="M15 8h12.700A14.500 14.500 0 0 0 2.400 7.800L9 18z" fill="#cf3d33" />
          <circle cx="15" cy="15" r="6.700" fill="#fff" /><circle cx="15" cy="15" r="5.300" fill="#4f83ea" />
        </Svg>
      </button>
      <button type="button" aria-label="PowerPoint" className="ml-8">
        <AppIcon letter="P" color="#c43a22"><path d="M15 4.500h14.500v21.500H15z" fill="#fff" stroke="#c43a22" /><path d="M22 7v5.500h5.500A5.500 5.500 0 1 1 22 7zM24 6.500a4 4 0 0 1 4 4h-4zM19 20h9M19 23h9" fill="#c43a22" stroke="#c43a22" strokeWidth="0.800" /></AppIcon>
      </button>
      <button type="button" aria-label="Excel" className="ml-[31px]">
        <AppIcon letter="X" color="#1f7244"><path d="M15 4.500h14.500v21.500H15z" fill="#fff" stroke="#1f7244" /><path d="M19 8h9M19 11.500h9M19 15h9M19 18.500h9M19 22h9" stroke="#1f7244" strokeWidth="2" /><path d="M23 5v20" stroke="#fff" /></AppIcon>
      </button>
      <button type="button" aria-label="OneNote" className="ml-[31px]">
        <AppIcon letter="N" color="#752a78"><path d="M15 4.500h12v21.500H15zM27 7h2.500v5H27M27 13h2.500v5H27M27 19h2.500v5H27" fill="#fff" stroke="#752a78" /><path d="M19 9h6M19 13h6M19 17h6M19 21h6" stroke="#752a78" strokeWidth="1.500" /></AppIcon>
      </button>
      <button type="button" aria-label="Outlook" className="ml-4 flex h-[38px]">
        <span className="flex w-[52px] items-center rounded-sm border border-[#3d4c66] bg-linear-to-br from-[#eef3fa] to-[#c3d0e4] pl-[10px]">
          <AppIcon letter="O" color="#1b62bb"><path d="M15 8.500h14.500v14H15z" fill="#fff" stroke="#1b62bb" /><path d="M17 12l5 5 7.500-8.500" stroke="#1b62bb" strokeWidth="1.500" /></AppIcon>
        </span>
        <span className="w-1 rounded-r-sm border border-l-0 border-[#5a6a88] bg-[#c9d5e8]" />
        <span className="w-1 rounded-r-sm border border-l-0 border-[#8294b5] bg-[#b5c5e0]" />
      </button>
      <button type="button" aria-label="Word" className="ml-[17px]">
        <AppIcon letter="W" color="#2a4f97"><path d="M15 4.500h14.500v21.500H15z" fill="#fff" stroke="#2a4f97" /><path d="M19 8.500h8M19 12h8M19 15.500h8M19 19h8M19 22.500h8" stroke="#2a4f97" strokeWidth="1.300" /></AppIcon>
      </button>
      <div className="ml-auto flex h-full w-[110px] items-center bg-linear-to-r from-[#a4b8da] via-[#7d8cae] via-35% to-[#76839f]">
        <button type="button" aria-label="Ausgeblendete Symbole" className="ml-[50px]"><Svg w={9} h={6}><path d="M0.500 5.500h8l-4-5z" fill="#fff" stroke="#4d5a7a" strokeWidth="0.600" /></Svg></button>
        <button type="button" aria-label="Lautstärke" className="ml-3"><Svg w={17} h={16}><path d="M1 5h2.500v6H1zM4.500 5L8 1.500v13L4.500 11z" fill="#fff" stroke="#444f66" strokeWidth="0.700" /><path d="M10 5.500q2 2.500 0 5M12 3.500q3.500 4.500 0 9M14 2q4.500 6 0 12" stroke="#fff" strokeWidth="1.200" /></Svg></button>
        <button type="button" aria-label="Desktop anzeigen" className="ml-auto h-full w-[14px] border border-[#aeb8cc] bg-linear-to-b from-[#6c7891] to-[#4f5a72]" />
      </div>
    </nav>
  );
}

/* Channel logo: two looped ribbons over the lower left corner */
function Watermark() {
  return (
    <div className="pointer-events-none absolute bottom-[26px] left-[41px]">
      <Svg w={78} h={68}>
        <g fill="#f6f6f6" fillOpacity="0.700" stroke="#9d9d9d" strokeWidth="1" fillRule="evenodd">
          <path d="M4 2C12-2 28 3 35 14c8 12 12 24 12 33-5 6-9 5-12 1C31 36 26 18 17 9 12 5 7 6 6 12c-1 13 4 27 12 39-4 1-7 0-9-3C3 36-1 15 4 2z" />
          <path d="M75 15c-5-3-22 3-33 18-8 10-14 22-14 30 2 5 8 5 14 2 6-12 14-22 24-30 7-6 11-14 9-20zM70 17c0 4-4 10-9 14-10 8-17 18-22 29-2-3-1-9 3-17 6-13 17-22 28-26z" />
          <path d="M9 48c-5 5-4 13 4 16 6 1 12-1 17-7v-5c-5 5-10 8-14 7-3-1-4-4-2-7z" />
        </g>
      </Svg>
    </div>
  );
}

export default function App() {
  return (
    <div className="relative flex h-screen flex-col overflow-hidden font-['Noto_Sans',sans-serif] text-[11px] text-[#3f3f3f]">
      <MainWindow />
      <Taskbar />
      <Compose />
      <Watermark />
    </div>
  );
}
